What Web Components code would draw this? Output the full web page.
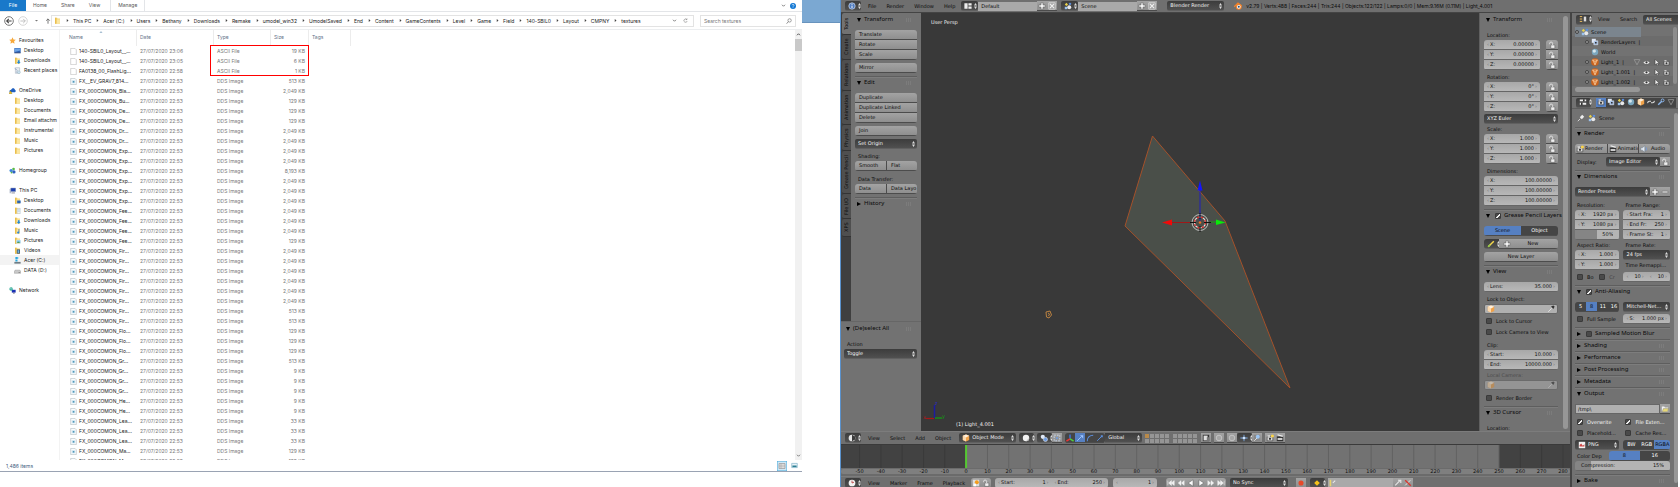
<!DOCTYPE html>
<html lang="en">
<head>
<meta charset="utf-8">
<title>Desktop</title>
<style>
html,body{margin:0;background:#fff}
body{height:100vh;overflow:hidden}
</style>
</head>
<body>
<desk-top></desk-top>
<script>
const RESET = `*{box-sizing:border-box}
button,input,select{font:inherit;color:inherit;margin:0;padding:0;border:0;background:none;border-radius:0;min-width:0;appearance:none;outline:0}
a{color:inherit;text-decoration:none}`;

function define(name, render) {
  customElements.define(name, class extends HTMLElement {
    connectedCallback() {
      if (this.shadowRoot) return;
      const t = document.createElement('template');
      t.innerHTML = render(this);
      this.attachShadow({mode: 'open'}).append(t.content.cloneNode(true));
    }
  });
}

/* ---------- icons, all on a 10 x 10 grid ---------- */
const FOLDER = '<path d="M1.5 1h3l.6 1H8.500v7.500H1.500z" fill="#f5d77b"/><path d="M1.500 1h2v8.500h-2z" fill="#e9bd4b"/><path d="M4 3.500h4.500v6H4z" fill="#fbe7a4"/>';
const CAM = '<path d="M1.500 3.500h7v5h-7z" fill="#ddd" stroke="#222" stroke-width=".6"/><circle cx="5" cy="6" r="1.400" fill="#333"/><path d="M2 1.800h3v1.500H2z" fill="#eee"/>';
const SWAN = (a,b) => `<path d="M1 2h3M1 5h3M1 8h3" stroke="${a}" stroke-width="1.200"/><path d="M6 2h3v6H6z" fill="${b}"/>`;
const ICONS = {
  star:'<path d="M5 .5l1.400 3 3.300.4L7.300 6.200l.6 3.300L5 7.900 2.100 9.500l.6-3.300L.300 3.900l3.300-.4z" fill="#f7a83a"/>',
  desk:'<path d="M.500 1.500h9v7h-9z" fill="#2d62b5"/><path d="M1 2h8v3L1 7z" fill="#6ea4e4"/><path d="M.500 8h9v1h-9z" fill="#333f66"/>',
  folder:FOLDER,
  fdown:FOLDER+'<path d="M5.500 4.500h2.500v2.500h1.500L6.800 10 4 7h1.500z" fill="#2589d8"/>',
  fdesk:FOLDER+'<path d="M4.500 5h5v4h-5z" fill="#2b62b0"/>',
  fdoc:FOLDER+'<path d="M4.500 2h4.500v7.500h-4.500z" fill="#eef4f8" stroke="#9ab" stroke-width=".5"/><path d="M5.300 4h3M5.300 6h3" stroke="#7aa6c9" stroke-width=".6"/>',
  fmusic:FOLDER+'<path d="M7 3v5" stroke="#1f6fc4" stroke-width="1"/><circle cx="6" cy="8" r="1.600" fill="#2b84d6"/>',
  fpic:FOLDER+'<path d="M3.500 4.500h6v4.500h-6z" fill="#7cc4ec" stroke="#eee" stroke-width=".6"/><path d="M4 8.500l2-2 3 2z" fill="#4d9a53"/>',
  fvid:FOLDER+'<path d="M4 3.500h4.500v6H4z" fill="#384a5f"/><path d="M5 4.500h2.500v4H5z" fill="#6fb1de"/>',
  recent:'<path d="M2 1h6v8H2z" fill="#e9edf2" stroke="#9aa7b8" stroke-width=".7"/><path d="M1 2l4 3M3 7l4 1" stroke="#7892b5" stroke-width="1"/><circle cx="7" cy="7.500" r="2" fill="#cfe3f4" stroke="#8aa"  stroke-width=".5"/>',
  cloud:'<path d="M1 7.500C0 5 2 4 3 4 4 1 8 1 8.500 4 10 4.500 10 7.500 8.500 7.500z" fill="#1f5fbf"/><path d="M0 9.500l2.200-4 2.200 4z" fill="#f5c518" stroke="#6b5200" stroke-width=".4"/>',
  home:'<circle cx="3" cy="5" r="2.300" fill="#3a86d8"/><circle cx="6.500" cy="2.800" r="1.900" fill="#57b947"/><circle cx="7" cy="7" r="2.400" fill="#2d5fc0"/><circle cx="3.500" cy="8" r="1.200" fill="#57b947"/>',
  pc:'<path d="M2.500 1.500h7v5h-7z" fill="#1d3fae" stroke="#8a97b5" stroke-width=".6"/><path d="M1 3h1.500v6H1z" fill="#9aa5bd"/><path d="M3.500 8h5v1h-5z" fill="#667"/>',
  drive:'<path d="M.500 7h9v2.500h-9z" fill="#6f7d86"/><path d="M2 0h3v3H2zM5.300 0h.7v3h-.7zM2 3.500h3v3H2z" fill="#29a9e0"/>',
  disk:'<path d="M1.500 4.500h7l1 2v2.500h-9v-2.500z" fill="#c9c9c9" stroke="#888" stroke-width=".6"/><path d="M6.500 7h2v1h-2z" fill="#555"/>',
  net:'<path d="M4 4h5.500v4H4z" fill="#1a2fb5"/><path d="M6 8h2v1.500H6z" fill="#778"/><circle cx="3" cy="3" r="2.500" fill="#2aa88a"/><path d="M1 2q2 2 4 0" stroke="#bfe7ff" fill="none"/>',
  file:'<path d="M1 .5h6l2 2v7H1z" fill="#fff" stroke="#a9a9a9" stroke-width=".7"/>',
  dds:'<path d="M1 .5h6l2 2v7H1z" fill="#fafcfd" stroke="#a9b1b8" stroke-width=".8"/><path d="M2.500 3.200h5v4.300h-5z" fill="#cfe5f1"/><path d="M4 4.200h2.200v2.400H4z" fill="#4f95b7"/>',
  back:'<circle cx="5" cy="5" r="4.300" fill="#fff" stroke="#777" stroke-width="1"/><path d="M2.600 5h5M4.800 2.900L2.700 5l2.100 2.100" stroke="#444" fill="none" stroke-width="1.100"/>',
  fwd:'<circle cx="5" cy="5" r="4.300" fill="#fff" stroke="#ccc" stroke-width=".8"/><path d="M7.400 5h-5M5.200 2.900L7.300 5 5.200 7.100" stroke="#bbb" fill="none" stroke-width=".9"/>',
  caret:'<path d="M2 4h6L5 7z" fill="#777"/>',
  vee:'<path d="M2 3.500l3 3 3-3" fill="none" stroke="#555" stroke-width="1.500"/>',
  hat:'<path d="M2 6.500l3-3 3 3" fill="none" stroke="#444" stroke-width="1.800"/>',
  sort:'<path d="M1 7l4-4 4 4z" fill="#8aa9c4"/>',
  up:'<path d="M5 9.500V1.500M2 4.500l3-3 3 3" fill="none" stroke="#666" stroke-width="1.500"/>',
  chev:'<path d="M3.500 2l3.500 3-3.500 3z" fill="#444"/>',
  refresh:'<path d="M7.500 3A3.300 3.300 0 1 0 8.300 6M5.500 3.200H8V.800" fill="none" stroke="#777" stroke-width="1.100"/>',
  search:'<circle cx="6" cy="4" r="2.800" fill="none" stroke="#666" stroke-width="1"/><path d="M4 6L1 9.500" stroke="#666" stroke-width="1.200"/>',
  help:'<circle cx="5" cy="5" r="5" fill="#1177d3"/><path d="M3.400 3.800c0-2 3.300-2 3.300 0 0 1.200-1.700 1.200-1.700 2.400M5 7.300v1.200" fill="none" stroke="#fff" stroke-width="1.100"/>',
  viewlist:'<path d="M0 0h10v10H0z" fill="#cfe9f7" stroke="#49a8d8" stroke-width="1"/><path d="M2 2.500h6v5H2z" fill="#e9e9e9" stroke="#999" stroke-width=".7"/><path d="M2 4.200h6M2 5.800h6M4 2.500v5" stroke="#999" stroke-width=".5"/>',
  viewpic:'<path d="M1 2h8v6H1z" fill="#e8f3f8" stroke="#6ba6c0" stroke-width=".8"/><path d="M2 5h6v2.300H2z" fill="#2d7f94"/>',
  info:'<circle cx="5" cy="5" r="4" fill="#4f7cc0" stroke="#dfe8f5" stroke-width=".8"/><path d="M5 4.500v3M5 2.300v1.200" stroke="#fff" stroke-width="1.200"/>',
  layout:'<path d="M.500 1.500h4v7h-4zM5.500 1.500h4v3h-4zM5.500 5.500h4v3h-4z" fill="#eee"/>',
  scene:'<circle cx="6.500" cy="6.500" r="2.500" fill="#e8e8e8"/><path d="M1 3l2-2 2 2-2 2z" fill="#e9d24b"/><circle cx="7.500" cy="2.300" r="1.500" fill="#5b8fe0"/><path d="M1 6h3v3H1z" fill="#9cc3ee"/>',
  plus:'<path d="M3.700 1h2.600v2.700H9v2.600H6.300V9H3.700V6.300H1V3.700h2.700z" fill="#f2f2f2" stroke="#555" stroke-width=".6"/>',
  minus:'<path d="M1.500 4h7v2h-7z" fill="#f2f2f2" stroke="#555" stroke-width=".5"/>',
  cross:'<path d="M1 1h8v8H1z" fill="none" stroke="#eee" stroke-width=".8"/><path d="M2.500 2.500l5 5M7.500 2.500l-5 5" stroke="#eee" stroke-width="1.500"/>',
  logo:'<path d="M0 6l5-4.500L9.500 5" stroke="#f0822b" stroke-width="1.600" fill="none"/><circle cx="6" cy="6" r="3.700" fill="#f0822b"/><circle cx="6" cy="6" r="2.300" fill="#fff"/><circle cx="6" cy="6" r="1.300" fill="#265787"/>',
  cube:'<path d="M5 .5l4 1.800v5.200L5 9.500 1 7.500V2.300z" fill="#f0a24a"/><path d="M5 4.200v5.300L1 7.500V2.300z" fill="#fbd9ae"/><path d="M5 .5l4 1.800-4 2-4-2z" fill="#fff0dc"/>',
  view3d:'<circle cx="5" cy="5" r="4.200" fill="#e6e6e6"/><path d="M5 1l4 2v4L5 9z" fill="#3a3a3a"/>',
  sphere:'<circle cx="5" cy="5" r="4" fill="#f2f2f2"/><path d="M5 9a4 4 0 0 0 4-4L7 7z" fill="#bbb"/>',
  pivot:'<circle cx="3.500" cy="3.500" r="2.600" fill="#dfe9f8"/><circle cx="6.800" cy="6.800" r="2.600" fill="#6d9be0" stroke="#fff" stroke-width=".6"/>',
  cloudbtn:'<path d="M1.500 1.500h7v7h-7z" fill="none" stroke="#cfe0f7" stroke-dasharray="2 1.500"/><circle cx="5" cy="5" r="1.300" fill="#6d9be0"/>',
  axes:'<path d="M5 6V.5" stroke="#3f7bf0" stroke-width="1.600"/><path d="M5 6L.500 9" stroke="#e33" stroke-width="1.800"/><path d="M5 6l4.500 3" stroke="#4fd13a" stroke-width="1.800"/>',
  arrow:'<path d="M1.500 8.500L7 3" stroke="#9fc4ff" stroke-width="1.200"/><path d="M5 1.500h4v4z" fill="#9fc4ff"/>',
  arc:'<path d="M1.500 9C1.500 4 5 1.500 9 1.500" stroke="#5b8fe0" stroke-width="1.300" fill="none"/>',
  scale:'<path d="M1.500 8.500L7 3" stroke="#5b8fe0" stroke-width="1.200"/><path d="M6 1.500h2.500V4H6z" fill="#5b8fe0"/>',
  lock:'<path d="M3.500 5h5v4.200h-5z" fill="#efefef" stroke="#444" stroke-width=".5"/><path d="M5.800 5V2.800c0-2-3.800-2-3.800 0V4" stroke="#eee" fill="none" stroke-width="1"/>',
  shade:'<path d="M1 1h8v8H1z" fill="#333"/><path d="M2 2h5v6H2z" fill="#ddd"/><path d="M6 4h3v5H6z" fill="#777"/>',
  ring:'<circle cx="5" cy="5" r="3.500" fill="#a6a6a6" stroke="#ccc" stroke-width="1"/>',
  snap:'<path d="M.500 5h9" stroke="#7fb1ef" stroke-width="1.200"/><path d="M5 1v8" stroke="#7fb1ef"/><circle cx="5" cy="5" r="1.700" fill="#cfe2fb"/>',
  magnet:'<path d="M1 1h8v8H1z" fill="#888"/><circle cx="6" cy="3.500" r="2.500" fill="#9cc5f2"/><path d="M1.500 8.500L5 5" stroke="#eee"/>',
  clap:'<path d="M1 3h8v6H1z" fill="#333"/><path d="M2 1l6.500 2" stroke="#eee" stroke-width="1.500"/><path d="M2 5h6v2.500H2z" fill="#ccc"/>',
  camflash:CAM+'<circle cx="8" cy="2.500" r="2" fill="#f8d24a"/>',
  cam:CAM,
  clock:'<circle cx="5" cy="5" r="4.200" fill="#f2f2f2"/><path d="M5 5V2M5 5l2.500-1" stroke="#b33"/>',
  autokey:'<path d="M1 1h8v8H1z" fill="#ddd"/><circle cx="6" cy="4" r="2.500" fill="#f39c1f"/><path d="M2 6h3v3H2z" fill="#fff"/>',
  rec:'<circle cx="5" cy="5" r="3.200" fill="#e8492a"/>',
  key:'<path d="M5 1.500L8.500 5 5 8.500 1.500 5z" fill="#f5c21b"/>',
  keyset:'<path d="M2 1h2v8H2z" fill="#e7d36a"/><path d="M6 5l3-3" stroke="#eee" stroke-width="1.300"/>',
  keyon:'<path d="M1.500 8L8 1.500M5 1.500h3.500V5" stroke="#e5e5e5" stroke-width="1.400" fill="none"/>',
  keyoff:'<path d="M1.500 8L8 1.500" stroke="#e5e5e5" stroke-width="1.200"/><path d="M1.500 1.500l7 7" stroke="#d8362c" stroke-width="1.600"/>',
  outliner:SWAN('#f0c060','#ddd'),
  propico:'<path d="M1 2h8v2H1zM1 6h8v2.500H1z" fill="#eee"/><path d="M5 1.500h2v3H5zM2.500 5.500h2V9h-2z" fill="#333"/>',
  layers:'<path d="M1 1h5v5H1z" fill="#dfe9f7"/><path d="M3.500 3.500h5v5h-5z" fill="#9cbbe6" stroke="#eee" stroke-width=".6"/><path d="M5 5h2v2H5z" fill="#333"/>',
  world:'<circle cx="5" cy="5" r="4" fill="#7ba7bf"/><path d="M2 3q3-2 4 0t-2 3q-2 0-2-3z" fill="#d8e6ec"/>',
  mesh:'<circle cx="5" cy="5" r="4.800" fill="#c9621c"/><path d="M2 2.500h6L5 8.500zM2 2.500L5 5l3-2.500M5 5v3.500" fill="none" stroke="#ffd9ae" stroke-width=".8"/>',
  tri:'<path d="M1.500 2h7L5 8.500z" fill="none" stroke="#999" stroke-width="1"/>',
  eye:'<path d="M.500 5Q5 .500 9.500 5 5 9.500.500 5z" fill="#f2f2f2"/><circle cx="5" cy="4.800" r="1.600" fill="#333"/>',
  cursor:'<path d="M3 .5v8l2-2 1.200 3 1.300-.6L6.300 6H9z" fill="#f2f2f2" stroke="#222" stroke-width=".6"/>',
  link:'<path d="M1 6.500a2 2 0 0 1 2-2.500h2M9 3.500a2 2 0 0 1-2 2.500H5" fill="none" stroke="#ddd" stroke-width="1.400"/>',
  wrench:'<path d="M1.500 8.500L6 4" stroke="#8db7ec" stroke-width="1.800"/><circle cx="7" cy="3" r="1.800" fill="none" stroke="#8db7ec" stroke-width="1.200"/>',
  pin:'<path d="M1 9l3-3" stroke="#eee"/><path d="M3.500 4l3-3 2.500 2.500-3 3z" fill="#eee"/>',
  pencil:'<path d="M1.500 8.500L8.500 1.500" stroke="#f6d84c" stroke-width="1.800"/><path d="M1.500 8.500L4 6" stroke="#8ccc4a" stroke-width="1.800"/>',
  dropper:'<path d="M1.500 8.500L6 4" stroke="#eee" stroke-width="1"/><path d="M5 2l3 3 1.500-3L8 .500z" fill="#333"/>',
  first:'<path d="M1 2v6M5.500 2v6L2 5zM9 2v6L5.500 5z" fill="#f2f2f2" stroke="#f2f2f2" stroke-width=".7"/>',
  prev:'<path d="M5 2v6L1.500 5zM9 2v6L5.500 5z" fill="#f2f2f2" stroke="#f2f2f2" stroke-width=".5"/>',
  rev:'<path d="M7.500 1v8L1.500 5z" fill="#fafafa" stroke="#444" stroke-width=".5"/>',
  play:'<path d="M2.500 1v8l6-4z" fill="#fafafa" stroke="#444" stroke-width=".5"/>',
  next:'<path d="M1 2v6l3.500-3zM5 2v6l3.500-3z" fill="#f2f2f2" stroke="#f2f2f2" stroke-width=".5"/>',
  last:'<path d="M9 2v6M1 2v6l3.500-3zM4.500 2v6L8 5z" fill="#f2f2f2" stroke="#f2f2f2" stroke-width=".7"/>',
  openf:'<path d="M1 2h3l1 1h4v5.500H1z" fill="#f2f2f2"/><path d="M3 4.500h6.500l-1.500 4H1.500z" fill="#e8d977" stroke="#555" stroke-width=".4"/>',
  img:'<path d="M1 1h8v8H1z" fill="#f2f2f2"/><path d="M2 5l2-2 2 3 2-2v3H2z" fill="#c44"/>',
  speaker:'<path d="M1 3.500h2L6 1v8L3 6.500H1z" fill="#e5ecf5" stroke="#567" stroke-width=".5"/><path d="M7.500 3q1.500 2 0 4" stroke="#6d9be0" fill="none"/>'
};
define('ui-icon', e => `<style>:host{display:block;flex:none;width:var(--size,8px);height:var(--size,8px)}svg{display:block;width:100%;height:100%}</style>
<svg viewBox="0 0 10 10" aria-hidden="true">${ICONS[e.getAttribute('name')] || ''}</svg>`);
const I = (n, c='') => `<ui-icon name="${n}" class="${c}"></ui-icon>`;

/* ================= File explorer ================= */
define('explorer-ribbon', () => `<style>${RESET}
:host{display:flex;align-items:center;height:12px;border-bottom:1px solid #e3e5e8;color:#555;padding-right:2px}
a{padding:0 7px;line-height:11px}
a.file{background:#1979ca;color:#fff;width:26px;text-align:center;padding:0}
nav{display:flex;flex:1}
.set{border:solid #e3e5e8;border-width:0 1px;margin-left:3px}
ui-icon{--size:6px;margin-right:4px}ui-icon.vee{--size:5px}
</style><nav><a class="file" href="#file">File</a><a href="#home">Home</a><a href="#share">Share</a><a href="#view">View</a><span class="set"><a href="#manage">Manage</a></span></nav>${I('vee','vee')}${I('help')}`);

const CRUMBS = ['This PC','Acer (C:)','Users','Bethany','Downloads','Remake','umodel_win32','UmodelSaved','End','Content','GameContents','Level','Game','Field','140-SBIL0','Layout','CMPNY','textures'];
define('address-bar', () => `<style>${RESET}
:host{display:flex;align-items:center;height:18px;border-bottom:1px solid #eceef0;color:#222;padding:0 6px 0 4px}
.hist{display:flex;align-items:center;gap:4px;width:47px}
.hist ui-icon{--size:10px}.hist .s{--size:5px;margin:0 2px}.hist .u{--size:6px}
.box{display:flex;align-items:center;height:12px;border:1px solid #e3e3e3;min-width:0}
.path{flex:1;padding:0 2px}.path ui-icon{--size:7px}
nav{display:flex;flex:1;min-width:0}
nav a{display:flex;align-items:center;white-space:nowrap}.path nav ui-icon{--size:5px;margin:0 3px 0 4px}
.path .end{--size:5px;margin:0 3px}
.find{flex:0 0 96px;margin-left:6px;padding:0 3px}
.find input{flex:1;width:0}.find input::placeholder{color:#777;opacity:1}.find ui-icon{--size:6px}
</style><div class="hist">${I('back')}${I('fwd')}${I('caret','s')}${I('up','u')}</div>
<div class="box path">${I('folder')}<nav aria-label="Path">${CRUMBS.map(c=>`<a href="#${encodeURIComponent(c)}">${I('chev')}${c}</a>`).join('')}</nav>${I('vee','end')}${I('refresh','end')}</div>
<div class="box find"><input aria-label="Search" placeholder="Search textures">${I('search')}</div>`);

const TREE = [['star','Favourites',[['desk','Desktop'],['fdown','Downloads'],['recent','Recent places']]],
['cloud','OneDrive',[['folder','Desktop'],['folder','Documents'],['folder','Email attachm'],['folder','Instrumental'],['folder','Music'],['folder','Pictures']]],
['home','Homegroup',[]],
['pc','This PC',[['fdesk','Desktop'],['fdoc','Documents'],['fdown','Downloads'],['fmusic','Music'],['fpic','Pictures'],['fvid','Videos'],['drive','Acer (C:)',1],['disk','DATA (D:)']]],
['net','Network',[]]];
define('nav-tree', () => `<style>${RESET}
:host{display:block;padding-top:5px;border-right:1px solid #f3f3f3;color:#222;overflow:hidden}
ul{list-style:none;margin:0;padding:0}.root>li{margin-bottom:10px}
a{display:flex;align-items:center;gap:3px;height:10px;padding-left:9px;white-space:nowrap;overflow:hidden;width:59px}
ul ul a{padding-left:14px}a.on{background:#f3f3f3}ui-icon{--size:7px}
</style><ul class="root">${TREE.map(([i,t,k])=>`<li><a href="#n">${I(i)}${t}</a>${k.length?`<ul>${k.map(([a,b,c])=>`<li><a href="#n"${c?' class="on"':''}>${I(a)}${b}</a></li>`).join('')}</ul>`:''}</li>`).join('')}</ul>`);

const FX = [['Bla',2049],['Bu',129],['De',129],['De',129],['Dr',2049],['Dr',2049],['Exp',2049],['Exp',2049],['Exp',8193],['Exp',2049],['Exp',2049],['Exp',2049],['Fee',2049],['Fee',2049],['Fee',2049],['Fee',129],['Fir',2049],['Fir',2049],['Fir',2049],['Fir',2049],['Fir',2049],['Fir',2049],['Fir',513],['Fir',513],['Flo',129],['Flo',129],['Flo',129],['Gr',513],['Gr',9],['Gr',9],['Gr',9],['He',9],['He',9],['Lea',33],['Lea',33],['Lea',33],['Ma',129],['Ma',129]];
const FILES = [['140-SBIL0_Layout__...','23:06',19,1],['140-SBIL0_Layout__...','23:05',6,1],['FA0138_00_FlashLig...','22:58',1,1],['FX__EV_GRAV7_814...','22:53',513]].concat(FX.map(([n,s])=>['FX_000COMON_'+n+'...','22:53',s]));
define('file-table', () => `<style>${RESET}
:host{display:flex;position:relative;overflow:hidden;min-width:0}
.list{flex:1;overflow:hidden}
table{table-layout:fixed;border-collapse:collapse;width:291px;color:#777}
th,td{padding:0;height:10px;font-weight:400;text-align:left;white-space:nowrap;overflow:hidden;line-height:10px}
th{height:16px;color:#5f7287;padding:0 0 0 3px}
th span{display:block;border-right:1px solid #ececec;line-height:14px;height:16px}
th:first-child{padding-left:9px}
td{padding-left:3px}td.n{color:#222}td.n div{display:flex;gap:2px;align-items:center;padding-left:7px}
td.k{text-align:right;padding-right:4px}ui-icon{--size:7px}
.mark{position:absolute;left:150px;top:15px;width:99px;height:31px;border:1px solid #f00}
.sort{position:absolute;left:39px;top:0;--size:4px}
.bar{width:7px;background:#f1f1f1;display:flex;flex-direction:column;align-items:center;padding:2px 0}
.bar ui-icon{--size:5px}.thumb{width:7px;height:12px;background:#c9c9c9;margin:2px 0 auto}
</style><div class="list"><table><colgroup><col style="width:77px"><col style="width:77px"><col style="width:57px"><col style="width:38px"><col style="width:42px"></colgroup>
<thead><tr>${['Name','Date','Type','Size','Tags'].map(h=>`<th scope="col"><span>${h}</span></th>`).join('')}</tr></thead>
<tbody>${FILES.map(([n,t,s,a])=>`<tr><td class="n"><div>${I(a?'file':'dds')}${n}</div></td><td>27/07/2020 ${t}</td><td>${a?'ASCII File':'DDS Image'}</td><td class="k">${s.toLocaleString('en-GB')} KB</td><td></td></tr>`).join('')}</tbody></table></div>
${I('sort','sort')}<div class="mark"></div><div class="bar">${I('hat')}<div class="thumb"></div>${I('vee')}</div>`);

define('file-explorer', () => `<style>${RESET}
:host{display:grid;grid-template-rows:auto auto minmax(0,1fr) 11px;background:#fff;font:5px/10px Inter,"Open Sans",sans-serif;border-bottom:1px solid #9aa3b3;min-width:0}
.main{display:grid;grid-template-columns:60px minmax(0,1fr);grid-template-rows:minmax(0,1fr);min-height:0}
footer{display:flex;align-items:center;color:#44607c;padding:0 4px 0 6px;gap:4px}
footer span{flex:1}ui-icon{--size:7px}ui-icon.b{--size:10px}
</style><explorer-ribbon></explorer-ribbon><address-bar></address-bar><div class="main"><nav-tree></nav-tree><file-table></file-table></div>
<footer><span>1,486 items</span>${I('viewlist','b')}${I('viewpic')}</footer>`);

/* ================= Blender widgets ================= */
define('bl-button', e => `<style>${RESET}
:host{display:block;height:10px;min-width:0;flex:1}
button{display:flex;align-items:center;justify-content:var(--just,flex-start);gap:1px;width:100%;height:10px;padding:0 var(--pad,4px);background:linear-gradient(#a3a3a3,#8f8f8f);border:solid #4c4c4c;border-width:0 0 1px;color:#0b0b0b;overflow:hidden;white-space:nowrap}
:host(:not(:first-child)[split]) button{border-left-width:1px}
:host([on]) button{background:#5680c2}:host([dark]) button{background:#454545;color:#fff}
</style><button type="button" aria-label="${e.getAttribute('label')||e.textContent||'tool'}"><slot></slot></button>`);

define('bl-num', e => { const l=e.getAttribute('label')||'', v=e.getAttribute('value'); return `<style>${RESET}
:host{display:block;height:10px;min-width:0;flex:1}
label{display:flex;align-items:center;gap:1px;height:10px;padding:0 3px;background:linear-gradient(#a8a8a8,#b8b8b8);border-bottom:1px solid #666;color:#111;white-space:nowrap}
input{flex:1;width:0;text-align:right}i{color:#777;font-style:normal}
:host([slider]) label{background:linear-gradient(90deg,#858585 var(--fill),#b4b4b4 0)}
:host([slider]) i{visibility:hidden}
</style><label><i>‹</i><span>${l}</span><input value="${v}" aria-label="${l||'Value'}"><i>›</i></label>`; });

define('bl-select', e => `<style>${RESET}
:host{display:flex;align-items:center;height:10px;min-width:0;flex:1;background:linear-gradient(#3c3c3c,#505050);border-radius:2px;color:#f2f2f2;padding:0 2px 0 3px;gap:2px;border-bottom:1px solid #606060}
select{flex:1;width:0;height:9px;line-height:9px;text-overflow:clip}
svg{width:3px;height:6px;flex:none}
</style><slot></slot>${e.hasAttribute('value')?`<select aria-label="${e.getAttribute('label')||e.getAttribute('value')}"><option>${e.getAttribute('value')}</option></select>`:''}<svg viewBox="0 0 3 6"><path d="M0 2.500L1.500 0 3 2.500zM0 3.500h3L1.500 6z" fill="#ddd"/></svg>`);

define('bl-check', e => `<style>${RESET}
:host{display:block;height:10px;min-width:0;flex:1}
label{display:flex;align-items:center;gap:4px;height:10px;padding-left:2px;white-space:nowrap;color:#0d0d0d;overflow:hidden}
:host([checked]) label{color:var(--on,#f4f4f4)}:host([dim]) label{color:#444}
input{width:6px;height:6px;background:#4a4a4a;border:1px solid #3a3a3a;border-radius:1px;flex:none}
input:checked{background:#4a4a4a linear-gradient(135deg,transparent 40%,#eee 40%,#eee 65%,transparent 65%)}
</style><label><input type="checkbox" aria-label="${e.getAttribute('aria-label')||e.textContent}"${e.hasAttribute('checked')?' checked':''}><slot></slot></label>`);

define('bl-panel', e => `<style>${RESET}
:host{display:block}
header{display:flex;align-items:center;gap:3px;height:12px;padding:0 0 0 2px;border-top:1px solid #5e5e5e;box-shadow:inset 0 1px #7d7d7d;color:#0a0a0a;font:6px/11px "Noto Sans",sans-serif;white-space:nowrap}
:host([first]) header{border-color:transparent;box-shadow:none}
h2{font:inherit;margin:0;flex:1;min-width:0}svg{width:4px;height:4px;flex:none}svg.d{width:5px;opacity:.4;margin-right:6px}
:host([tick]) svg.d{display:none}
.body{padding:5px 0 3px}bl-check{flex:none;width:8px;--on:#0a0a0a}
</style><header><svg viewBox="0 0 4 4"><path d="${e.hasAttribute('closed')?'M0 0l4 2-4 2z':'M0 0h4L2 4z'}"/></svg>${e.hasAttribute('tick')?`<bl-check${e.getAttribute('tick')==='on'?' checked':''} aria-label="${e.getAttribute('name')}"></bl-check>`:''}<h2>${e.getAttribute('name')}</h2><svg class="d" viewBox="0 0 5 4"><path d="M0 1h5M0 3h5" stroke="#ddd" stroke-width=".5" stroke-dasharray="1 1"/></svg></header>${e.hasAttribute('closed')?'':'<div class="body"><slot></slot></div>'}`);

const KIT = `${RESET}
.grp{display:grid;border-radius:3px;overflow:hidden}
.row{display:flex;min-width:0}.grp.row{display:flex}
.lab{height:10px;line-height:10px;padding-left:3px;white-space:nowrap;overflow:hidden;color:#0d0d0d}
.s1{margin-top:1px}.s2{margin-top:2px}.s3{margin-top:3px}
.vec{display:grid;grid-template-columns:minmax(0,1fr) 12px;gap:6px}
.locks{--pad:2px}.mid{--just:center}
.data{display:flex;align-items:center;height:10px;background:#b0b0b0;border:1px solid #666;border-radius:2px;padding:0 2px}
.data input{flex:1;width:0}
`;
const BAR = `${KIT}
:host{display:flex;align-items:center;height:13px;background:#6f6f6f;color:#0b0b0b;padding-left:4px;white-space:nowrap;overflow:hidden;border-top:1px solid #7c7c7c}
.ed{flex:none;width:16px;margin-right:7px}bl-select ui-icon{--size:8px}
nav{display:flex}nav a{margin-right:10px}
bl-select,bl-button,bl-num,.grp{flex:none}.sq{width:10px;--pad:1px}`;
const num = (l,v) => `<bl-num label="${l}" value="${v}"></bl-num>`;
const lockBtn = `<bl-button label="Lock">${I('lock')}</bl-button>`;
const vec = v => `<div class="vec"><div class="grp">${['X:','Y:','Z:'].map(a=>num(a,v)).join('')}</div><div class="grp locks">${lockBtn.repeat(3)}</div></div>`;

define('info-header', () => `<style>${BAR}
:host{border-top:0;border-bottom:1px solid #444}
nav{margin-right:-4px}.field{display:flex;align-items:center;height:9px;background:#a9a9a9;width:59px;padding:0 3px}.field input{width:100%}
.db{display:flex;align-items:center;margin-right:4px}.db bl-select{width:17px}.eng{width:57px;margin:0 10px 0 6px}.logo{margin-right:4px}
.stats{font-family:Inter,sans-serif}
</style><bl-select class="ed">${I('info')}</bl-select><nav><a href="#f">File</a><a href="#r">Render</a><a href="#w">Window</a><a href="#h">Help</a></nav>
<div class="db"><bl-select>${I('layout')}</bl-select><label class="field"><input value="Default" aria-label="Screen layout"></label><bl-button class="sq" label="Add">${I('plus')}</bl-button><bl-button class="sq" label="Remove">${I('cross')}</bl-button></div>
<div class="db"><bl-select>${I('scene')}</bl-select><label class="field"><input value="Scene" aria-label="Scene"></label><bl-button class="sq" label="Add">${I('plus')}</bl-button><bl-button class="sq" label="Remove">${I('cross')}</bl-button></div>
<bl-select class="eng" value="Blender Render" label="Engine"></bl-select>${I('logo','logo')}<span class="stats">v2.79 | Verts:488 | Faces:244 | Tris:244 | Objects:122/122 | Lamps:0/0 | Mem:9.16M (0.11M) | Light_4.001</span>`);

const TABS = [['Tools',22],['Create',25],['Relations',31],['Animation',34],['Physics',26],['Grease Pencil',43],['File I/O',25],['XPS',18]];
define('tool-shelf', () => `<style>${KIT}
:host{display:grid;grid-template-rows:308px minmax(0,1fr);background:#727272;overflow:hidden;min-height:0}
.top{display:grid;grid-template-columns:10px minmax(0,1fr);min-height:0}
.tabs{background:#3f3f3f;display:flex;flex-direction:column;padding-left:1px}
.tabs a{writing-mode:vertical-rl;transform:rotate(180deg);background:#4f4f4f;color:#0a0a0a;border-top:1px solid #333;border-radius:0 2px 2px 0;line-height:9px;text-align:center}
.tabs a.on{background:#727272}
.panels{padding:0 4px}.op{border-top:1px solid #666;padding:0 4px 0 3px}
</style><div class="top"><div class="tabs">${TABS.map(([t,h],i)=>`<a href="#t" style="height:${h}px"${i?'':' class="on"'}>${t}</a>`).join('')}</div>
<div class="panels"><bl-panel name="Transform" first><div class="grp"><bl-button>Translate</bl-button><bl-button>Rotate</bl-button><bl-button>Scale</bl-button></div><div class="grp s3"><bl-button>Mirror</bl-button></div></bl-panel>
<bl-panel name="Edit"><div class="grp"><bl-button>Duplicate</bl-button><bl-button>Duplicate Linked</bl-button><bl-button>Delete</bl-button></div><div class="grp s3"><bl-button>Join</bl-button></div><bl-select class="s3" value="Set Origin"></bl-select>
<div class="lab s2">Shading:</div><div class="grp row"><bl-button split>Smooth</bl-button><bl-button split>Flat</bl-button></div><div class="lab s3">Data Transfer:</div><div class="grp row"><bl-button split>Data</bl-button><bl-button split>Data Layo</bl-button></div></bl-panel>
<bl-panel name="History" closed></bl-panel></div></div>
<div class="op"><bl-panel name="(De)select All" first><div class="lab">Action</div><bl-select value="Toggle" label="Action"></bl-select></bl-panel></div>`);

define('view-port', () => `<style>:host{display:block;background:#393939;overflow:hidden;min-width:0}svg{display:block}text{font:5px "DejaVu Sans",sans-serif;fill:#f2f2f2}</style>
<svg width="557" height="418" viewBox="921 13 557 418" role="img" aria-label="3D view">
<path d="M1152.500 136L1125 226 1290 388 1225 221z" fill="#4a4f49" stroke="#a4512a" stroke-width="1"/>
<path d="M1200 222v-32" stroke="#2020b8" stroke-width="1"/><path d="M1197.500 190.500l2.500-10 2.500 10z" fill="#1414ff"/>
<path d="M1192 222.500h-20" stroke="#a01818"/><path d="M1172 219.500v6l-10-3z" fill="#f00a0a"/>
<path d="M1210 222h8" stroke="#18a018"/><path d="M1216 219.500v5.500l9.500-2.500z" fill="#0be80b"/>
<circle cx="1200" cy="222.500" r="8" fill="none" stroke="#ddd" stroke-width=".8"/>
<circle cx="1200" cy="222.500" r="5.500" fill="none" stroke="#e8e8e8" stroke-width="1.200"/><circle cx="1200" cy="222.500" r="5.500" fill="none" stroke="#d22" stroke-width="1.200" stroke-dasharray="2.200 2.200"/>
<path d="M1190 222.500h6M1204 222.500h7M1200 213v6M1200 226v6" stroke="#111"/><circle cx="1200" cy="222.500" r="1.300" fill="#f07020"/>
<path d="M1046 312l4-1 1.500 4-2.500 3-2.500-1zM1048 313l1.500 1-1 2" fill="none" stroke="#c98a42" stroke-width=".9"/>
<path d="M934.500 418V405" stroke="#1c1ca0" stroke-width="1.500"/><path d="M934 418.500h-8" stroke="#a81616" stroke-width="1.200"/><path d="M935 418h7" stroke="#12a012" stroke-width="1.200"/>
<text x="935" y="405" style="fill:#2a2ac0">z</text><text x="923" y="419" style="fill:#b01818">x</text><text x="942" y="418" style="fill:#12a012">y</text>
<text x="931" y="24">User Persp</text><text x="956" y="426">(1) Light_4.001</text></svg>`);

define('view-properties', () => `<style>${KIT}
:host{display:flex;background:#727272;border-left:1px solid #606060;overflow:hidden;min-height:0}
.c{flex:1;padding:0 5px 0 4px;min-width:0}.bar{width:5px;margin:3px 2px 2px 0;border-radius:3px;background:#979797;flex:none}
.dim{color:#4c4c4c}.faded{opacity:.55}.pen{flex:none;width:15px;border-radius:0}.fld{--size:8px}
</style><div class="c">
<bl-panel name="Transform" first><div class="lab">Location:</div>${vec('0.00000')}<div class="lab s2">Rotation:</div>${vec('0°')}<bl-select class="s2" value="XYZ Euler"></bl-select><div class="lab">Scale:</div>${vec('1.000')}
<div class="lab s2">Dimensions:</div><div class="grp">${['X:','Y:','Z:'].map(a=>num(a,'100.00000')).join('')}</div></bl-panel>
<bl-panel name="Grease Pencil Layers" tick="on"><div class="grp row mid"><bl-button on>Scene</bl-button><bl-button dark>Object</bl-button></div><div class="grp row s3"><bl-select class="pen" label="Pencil">${I('pencil')}</bl-select><bl-button label="New">${I('plus')}<span style="flex:1;text-align:center">New</span></bl-button></div><div class="grp s3 mid"><bl-button>New Layer</bl-button></div></bl-panel>
<bl-panel name="View"><div class="grp">${num('Lens:','35.000')}</div><div class="lab s2">Lock to Object:</div><div class="data fld">${I('cube')}<input aria-label="Lock to Object">${I('dropper')}</div><bl-check class="s2">Lock to Cursor</bl-check><bl-check class="s1">Lock Camera to View</bl-check>
<div class="lab s3">Clip:</div><div class="grp">${num('Start:','10.000')}${num('End:','10000.000')}</div><div class="lab dim">Local Camera:</div><div class="data faded">${I('cube')}<input aria-label="Local Camera">${I('dropper')}</div><bl-check class="s3">Render Border</bl-check></bl-panel>
<bl-panel name="3D Cursor"><div class="lab">Location:</div></bl-panel></div><div class="bar"></div>`);

define('view-header', () => `<style>${BAR}
.mode{width:57px;margin:0 3px 0 -2px}.w{width:15px;margin-right:3px}.m{margin-right:3px}.glob{width:37px;border-radius:0 2px 2px 0}
.lay{display:grid;grid-template-columns:repeat(5,4px);grid-auto-rows:4px;gap:1px;margin:0 1px 0 3px}.lay i{background:#959595}.lay .o{background:#b98a4a}
.w0{width:15px}.sh{margin:0 3px}
</style><bl-select class="ed">${I('view3d')}</bl-select><nav><a href="#v">View</a><a href="#s">Select</a><a href="#a">Add</a><a href="#o">Object</a></nav>
<bl-select class="mode" value="Object Mode">${I('cube')}</bl-select><bl-select class="w">${I('sphere')}</bl-select><bl-select class="w0">${I('pivot')}</bl-select><bl-button class="sq m">${I('cloudbtn')}</bl-button>
<div class="grp row"><bl-button dark class="sq">${I('axes')}</bl-button><bl-button on class="sq">${I('arrow')}</bl-button><bl-button dark class="sq">${I('arc')}</bl-button><bl-button dark class="sq">${I('scale')}</bl-button></div><bl-select class="glob" value="Global"></bl-select>
<div class="lay"><i class="o"></i>${'<i></i>'.repeat(9)}</div><div class="lay">${'<i></i>'.repeat(10)}</div>
<bl-button class="sq sh">${I('shade')}</bl-button><bl-button class="sq m">${I('ring')}</bl-button><bl-button class="sq">${I('ring')}</bl-button><bl-select class="w0">${I('snap')}</bl-select><bl-button class="sq m">${I('magnet')}</bl-button><bl-button class="sq">${I('camflash')}</bl-button><bl-button class="sq">${I('clap')}</bl-button>`);

const F0 = -58.7, SPAN = 342, pc = f => ((f - F0) / SPAN * 100).toFixed(2) + '%';
const frames = Array.from({length:34}, (_, i) => (i - 5) * 10);
define('time-line', () => `<style>:host{display:block;height:32px;background:#424242;border-top:1px solid #3a3a3a;overflow:hidden}svg{display:block;width:100%;height:31px}text{font:5px "DejaVu Sans",sans-serif;fill:#101010;text-anchor:middle}</style>
<svg role="img" aria-label="Timeline"><rect x="${pc(0)}" width="${((250)/SPAN*100).toFixed(2)}%" height="23" fill="#727272"/>
${frames.map(f=>`<line x1="${pc(f)}" x2="${pc(f)}" y1="0" y2="23" stroke="${f<0||f>250?'#3a3a3a':'#626262'}"/>`).join('')}
<rect y="23" width="100%" height="8" fill="#6b6b6b"/><rect y="24" width="100%" height="5" rx="2" fill="#7f7f7f"/>
<rect x="${pc(-.5)}" width="2" height="23" fill="#55c832"/>
${frames.map(f=>`<text x="${pc(f)}" y="28">${f}</text>`).join('')}</svg>`);

define('timeline-header', () => `<style>${BAR}
.a{margin-left:-4px}.r{width:113px;margin:0 5px 0 4px}.r bl-num{flex:1}.f{width:44px;margin-right:9px}.sync{width:58px;margin:0 8px 0 4px}.k{width:15px;margin:0 3px 0 4px}
.set{width:65px;height:10px;background:#a9a9a9;display:flex;align-items:center;flex:none}.set input{flex:1;width:0}
</style><bl-select class="ed">${I('clock')}</bl-select><nav><a href="#v">View</a><a href="#m">Marker</a><a href="#f">Frame</a><a href="#p">Playback</a></nav>
<div class="grp row a"><bl-button class="sq">${I('autokey')}</bl-button><bl-button class="sq">${I('lock')}</bl-button></div><div class="grp row r">${num('Start:','1')}${num('End:','250')}</div><div class="grp f">${num('','1')}</div>
<div class="grp row">${['first','prev','rev','play','next','last'].map(n=>`<bl-button class="sq" label="${n}">${I(n)}</bl-button>`).join('')}</div>
<bl-select class="sync" value="No Sync"></bl-select><bl-button class="sq">${I('rec')}</bl-button><bl-select class="k">${I('key')}</bl-select><div class="set">${I('keyset')}<input aria-label="Keying set"></div><bl-button class="sq">${I('keyon')}</bl-button><bl-button class="sq">${I('keyoff')}</bl-button>`);

define('out-liner', () => `<style>${KIT}
:host{display:block;height:84px;background:#727272;overflow:hidden;border-bottom:1px solid #444}
header{display:flex;align-items:center;gap:10px;height:13px;padding:0 0 0 4px;white-space:nowrap}header .ed{flex:none;width:16px;margin-right:-4px}.all{flex:none;width:40px;margin-left:-4px}
.w{display:flex}
ul{list-style:none;margin:0;padding:1px 0 0 3px;flex:1;min-width:0;background:repeating-linear-gradient(#727272 0 10px,#6c6c6c 10px 20px)}
li{display:flex;align-items:center;gap:2px;height:10px;padding-left:10px;white-space:nowrap;--size:8px}li.top{padding-left:0;background:#7b858e;margin-right:32px}
i{width:4px;height:4px;border-radius:2px;background:#999;border:1px solid #444;flex:none}.no{visibility:hidden}
li span{flex:1;color:#0a0a0a}.v{display:flex;gap:3px;--size:7px;margin-right:3px}.bar{height:5px;margin:0 38px 0 3px;border-radius:3px;background:#979797}
.vb{width:4px;background:#8d8d8d;border-radius:2px;margin:1px 1px 3px 0}
</style><header><bl-select class="ed">${I('outliner')}</bl-select><a href="#v">View</a><a href="#s">Search</a><bl-select class="all" value="All Scenes"></bl-select></header>
<div class="w"><ul><li class="top"><i></i>${I('scene')}<span>Scene</span></li><li><i></i>${I('layers')}<span>RenderLayers&nbsp; |</span></li><li><i class="no"></i>${I('world')}<span>World</span></li>
${[['Light_1&nbsp; |',1],['Light_1.001&nbsp; |'],['Light_1.002&nbsp; |']].map(([t,x])=>`<li><i></i>${I('mesh')}<span>${t}</span>${x?I('tri'):''}<div class="v">${I('eye')}${I('cursor')}${I('cam')}</div></li>`).join('')}</ul><div class="vb"></div></div><div class="bar"></div>`);

define('render-properties', () => `<style>${KIT}
:host{display:block;background:#727272;overflow:hidden;min-height:0}
.hd{display:flex;align-items:center;height:12px;padding-left:4px;border-bottom:1px solid #5e5e5e}.hd>bl-select{flex:none;width:15px;margin-right:5px}.tabs{display:flex;--pad:1px}.tabs bl-button{flex:none;width:10px}
.w{display:flex}.c{flex:1;min-width:0;padding:4px 4px 0 3px}.bar{width:4px;margin:4px 0 0;flex:none;border-radius:2px;background:#979797;height:370px}
.ctx{display:flex;align-items:center;gap:3px;height:10px;margin-bottom:4px;padding-left:2px}
.two{display:grid;grid-template-columns:minmax(0,44fr) minmax(0,46fr);column-gap:4px;align-content:start}
.sm{flex:none;width:10px;--pad:1px}.rd{--pad:1px}.lab{padding-left:2px}.path{border-radius:0}.x{flex:1}
.disp{flex:0 0 31px}.cd{flex:0 0 34px}
</style><div class="hd"><bl-select>${I('propico')}</bl-select><div class="tabs">${['cam','layers','scene','world','cube','link','wrench','tri'].map((n,i)=>`<bl-button ${i?'dark':'on'} label="${n}">${I(n)}</bl-button>`).join('')}</div></div>
<div class="w"><div class="c"><div class="ctx">${I('pin')}${I('scene')}<span>Scene</span></div>
<bl-panel name="Render"><div class="grp row rd"><bl-button split>${I('camflash')}Render</bl-button><bl-button split>${I('clap')}Animatic</bl-button><bl-button split>${I('speaker')}&nbsp;Audio</bl-button></div>
<div class="row s3"><div class="lab disp">Display:</div><bl-select value="Image Editor"></bl-select><bl-button class="sm">${I('lock')}</bl-button></div></bl-panel>
<bl-panel name="Dimensions"><div class="row"><bl-select value="Render Presets"></bl-select><bl-button class="sm" label="Add">${I('plus')}</bl-button><bl-button class="sm" label="Remove">${I('minus')}</bl-button></div>
<div class="two s3"><div><div class="lab">Resolution:</div><div class="grp">${num('X:','1920 px')}${num('Y:','1080 px')}<bl-num slider style="--fill:50%" value="50%"></bl-num></div><div class="lab">Aspect Ratio:</div><div class="grp">${num('X:','1.000')}${num('Y:','1.000')}</div><div class="row s2"><bl-check>Bo</bl-check><bl-check dim>Cr</bl-check></div></div>
<div><div class="lab">Frame Range:</div><div class="grp">${num('Start Fra:','1')}${num('End Fr:','250')}${num('Frame St:','1')}</div><div class="lab">Frame Rate:</div><bl-select value="24 fps"></bl-select><div class="lab">Time Remappi...</div><div class="grp row s2">${num('','10')}${num('','10')}</div></div></div></bl-panel>
<bl-panel name="Anti-Aliasing" tick="on"><div class="two"><div class="grp row mid rd"><bl-button dark>5</bl-button><bl-button on>8</bl-button><bl-button dark>11</bl-button><bl-button dark>16</bl-button></div><bl-select value="Mitchell-Net..."></bl-select><bl-check class="s2">Full Sample</bl-check><div class="grp s2">${num('S:','1.000 px')}</div></div></bl-panel>
<bl-panel name="Sampled Motion Blur" tick="off" closed></bl-panel><bl-panel name="Shading" closed></bl-panel><bl-panel name="Performance" closed></bl-panel><bl-panel name="Post Processing" closed></bl-panel><bl-panel name="Metadata" closed></bl-panel>
<bl-panel name="Output"><div class="row"><div class="data path x"><input value="/tmp\\" aria-label="Output path"></div><bl-button class="sm" label="Browse">${I('openf')}</bl-button></div>
<div class="two s3"><bl-check checked>Overwrite</bl-check><bl-check checked>File Exten...</bl-check><bl-check class="s1">Placehold...</bl-check><bl-check class="s1">Cache Res...</bl-check></div>
<div class="two s2"><bl-select value="PNG">${I('img')}</bl-select><div class="grp row mid rd"><bl-button dark>BW</bl-button><bl-button dark>RGB</bl-button><bl-button on>RGBA</bl-button></div></div>
<div class="row s1"><div class="lab cd">Color Dep</div><div class="grp row mid x"><bl-button on>8</bl-button><bl-button dark>16</bl-button></div></div>
<div class="grp"><bl-num slider style="--fill:17%" label="Compression:" value="15%"></bl-num></div></bl-panel>
<bl-panel name="Bake" closed></bl-panel></div><div class="bar"></div></div>`);

define('blender-window', () => `<style>${RESET}
:host{display:grid;grid-template-rows:13px minmax(0,1fr);background:#727272;color:#0b0b0b;font:5px/9px "DejaVu Sans",sans-serif;border-left:1px solid #5b92cc;min-width:0;overflow:hidden}
.main{display:grid;grid-template-columns:minmax(0,1fr) 108px;grid-template-rows:minmax(0,1fr);min-height:0}
.left{display:grid;grid-template-rows:minmax(0,1fr) 13px 32px 11px;min-height:0;min-width:0}
.area{display:grid;grid-template-columns:80px minmax(0,1fr) 91px;grid-template-rows:minmax(0,1fr);min-height:0}
.right{display:grid;grid-template-rows:auto minmax(0,1fr);border-left:2px solid #444;min-height:0;min-width:0}
</style><info-header></info-header><div class="main"><div class="left"><div class="area"><tool-shelf></tool-shelf><view-port></view-port><view-properties></view-properties></div><view-header></view-header><time-line></time-line><timeline-header></timeline-header></div>
<div class="right"><out-liner></out-liner><render-properties></render-properties></div></div>`);

define('desk-top', () => `<style>
:host{display:grid;grid-template-columns:minmax(0,802fr) 38px minmax(0,838fr);grid-template-rows:minmax(0,1fr);height:100vh;padding-right:2px;box-sizing:border-box}
file-explorer{margin-bottom:15px}
.wall{height:23px;background:#7ba8d2;border-bottom:1px solid #6893bd;box-sizing:border-box}
</style><file-explorer></file-explorer><div class="wall"></div><blender-window></blender-window>`);
</script>
</body>
</html>
